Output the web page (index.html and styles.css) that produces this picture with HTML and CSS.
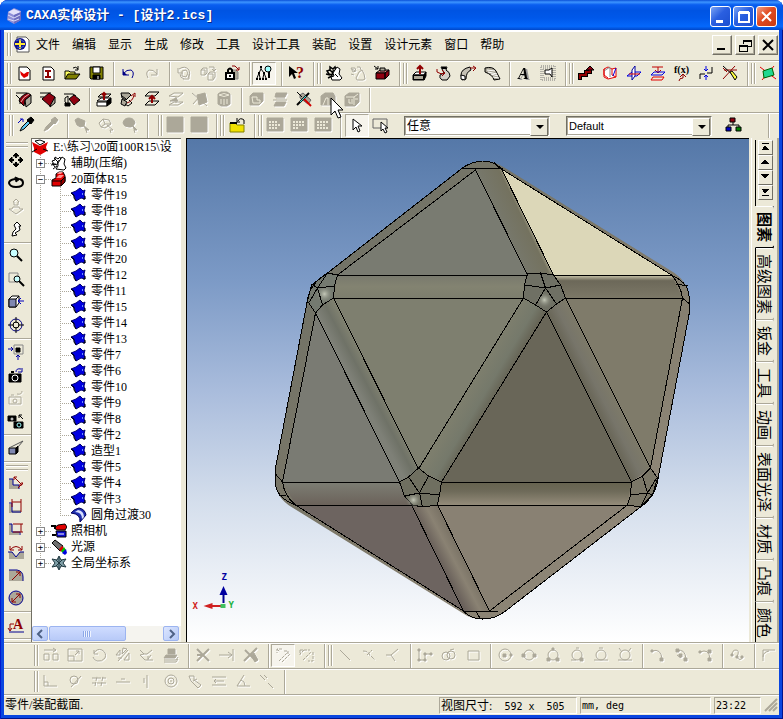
FILE: index.html
```html
<!DOCTYPE html>
<html lang="zh-CN">
<head>
    <meta charset="UTF-8">
    <meta name="viewport" content="width=device-width, initial-scale=1.0">
    <title>CAXA实体设计 - [设计2.ics]</title>
    <link rel="stylesheet" href="styles.css">
</head>
<body>

<!-- shared shapes -->
<svg class="defs" aria-hidden="true">
    <symbol id="part" viewBox="0 0 16 16">
        <path d="M0 6L5 4L9 1L12 4L14 3L13 7L14 12L10 11L5 14L4 11L3 9Z" fill="#0000e0" stroke="#000070"/>
        <path d="M0 6L3 8L3 11L5 14M14 9V12H12" stroke="#000" fill="none"/>
        <path d="M11 6h1v2h-1z" fill="#6a8cff"/>
    </symbol>
</svg>

<div class="window">
    <header class="titlebar">
        <svg class="app-icon" aria-hidden="true">
            <path d="M2 4l6-4 7 3v9l-7 4-7-4z" fill="#8f8fd8"/>
            <path d="M2 4l6-3 7 3-7 3z" fill="#e4e2fa"/>
            <path d="M8 7l7-3v8l-7 4z" fill="#6c6cc0"/>
            <path d="M2 7l6 3 6-3M2 11l6 2 5-2" stroke="#dcdcf8" fill="none"/>
        </svg>
        <h1>CAXA实体设计 - [设计2.ics]</h1>
        <div class="win-buttons">
            <button class="win-btn" aria-label="最小化"><svg><path d="M5 13h7v3h-7z" fill="#fff"/></svg></button>
            <button class="win-btn" aria-label="最大化"><svg><path d="M5 6h10v9h-10zM5 5h10" fill="none" stroke="#fff" stroke-width="2"/></svg></button>
            <button class="win-btn close" aria-label="关闭"><svg><path d="M5 5l9 9M14 5l-9 9" stroke="#fff" stroke-width="2"/></svg></button>
        </div>
    </header>

    <nav class="bar menu">
        <i class="grip"></i>
        <svg class="doc-icon" aria-hidden="true">
            <path d="M4 1h9l3 3v12h-12z" fill="#fff" stroke="#555"/>
            <circle cx="7" cy="8" r="6" fill="#10108c"/>
            <path d="M2 8h10M7 3v10" stroke="#ffe838" stroke-width="2" fill="none"/>
            <path d="M3 5q4-3 8 1M4 11q4 2 7-1" stroke="#4060d0" fill="none"/>
        </svg>
        <ul class="menu-list">
            <li><a href="#">文件</a></li>
            <li><a href="#">编辑</a></li>
            <li><a href="#">显示</a></li>
            <li><a href="#">生成</a></li>
            <li><a href="#">修改</a></li>
            <li><a href="#">工具</a></li>
            <li><a href="#">设计工具</a></li>
            <li><a href="#">装配</a></li>
            <li><a href="#">设置</a></li>
            <li><a href="#">设计元素</a></li>
            <li><a href="#">窗口</a></li>
            <li><a href="#">帮助</a></li>
        </ul>
        <div class="mdi-buttons">
            <button class="mdi-btn" aria-label="最小化文档"><svg><path d="M3 12h8" stroke="#000" stroke-width="2"/></svg></button>
            <button class="mdi-btn" aria-label="还原文档"><svg><path d="M6 7v-4h8v6h-3M6 4h8M2 8h8v6h-8zM2 9h8" fill="none" stroke="#000"/></svg></button>
            <button class="mdi-btn" aria-label="关闭文档"><svg><path d="M3 3l10 10M13 3l-10 10" stroke="#000" stroke-width="2"/></svg></button>
        </div>
    </nav>

    <!-- standard / assembly / feature / curve toolbars -->
    <div class="bar">
        <i class="grip"></i>
        <button class="tb" aria-label="新建设计"><svg><path class="w" d="M3 2h8l3 3v10h-11z"/><path d="M4 6l4 3 3-2 2 0-1 4-4 2-3-3z" fill="#e00000" stroke="none"/></svg></button>
        <button class="tb" aria-label="新建图纸"><svg><path class="w" d="M3 2h8l3 3v10h-11z"/><path class="ms" d="M5 6h6M8 6v6M5 12h6" stroke-width="2"/></svg></button>
        <button class="tb" aria-label="打开"><svg><path d="M1 14v-8h4l1 1h5v3" fill="#ffff60"/><path d="M1 14l3-5h12l-4 5z" fill="#808000"/><path d="M9 3q3-2 5 1M14 1v4h-3"/></svg></button>
        <button class="tb" aria-label="保存"><svg><path d="M2 2h13v12h-12l-1-1z" fill="#808000"/><path class="w" d="M5 2h7v6h-7z"/><path class="k" d="M5 10h7v4h-7z"/><path d="M10 11v3" stroke="#fff"/></svg></button>
        <i class="sep"></i>
        <button class="tb" aria-label="撤消"><svg><path class="bs" d="M3 4v6h6M3 9q4-5 8-4 4 2 1 8"/><path d="M3 6l4 4h-4z" fill="#000080" stroke="none"/></svg></button>
        <button class="tb" aria-label="重做" disabled><svg><path d="M13 4v6h-6M13 9q-4-5-8-4-4 2-1 8"/></svg></button>
        <i class="sep"></i>
        <button class="tb" aria-label="重新生成" disabled><svg><path d="M2 3v5h5M3 4q6-4 10 1 2 4-1 8M13 14h-6M4 9q0 4 4 5M13 9v5M6 6l4-1 2 3-2 4-4-1z"/></svg></button>
        <button class="tb" aria-label="复制零件" disabled><svg><path d="M1 5l2-2h4v5l-2 2h-4zM1 5h4v5M8 9l2-2h5v5l-2 3h-5zM8 9h5v5M9 2h5v4M12 4l2 2 2-2"/></svg></button>
        <button class="tb" aria-label="锁定"><svg><path class="s" d="M8 5h4l2 2v7h-4z" stroke="#888"/><path class="w" d="M2 8h8v6h-8z" stroke-width="2"/><path d="M4 7v-2q2-3 4 0v2M6 10v2" stroke-width="2"/><path class="ms" d="M8 1h3l4 4M15 2v3h-3"/></svg></button>
        <i class="sep"></i>
        <button class="tb pressed" aria-label="设计树"><svg><path d="M5 1v3l-2 4M5 4l3 4M3 8l-2 5M3 8l1 5M8 8l-1 5M8 8l2 5"/><path class="k" d="M4 1h2v2h-2zM2 7h2v2h-2zM7 7h2v2h-2zM0 13h2v2h-2zM3 13h2v2h-2zM6 13h2v2h-2zM9 13h2v2h-2z" stroke="none"/><circle cx="12" cy="4" r="3" fill="#a0ffff"/><path d="M13 7v6" stroke-width="2"/></svg></button>
        <i class="sep"></i>
        <button class="tb" aria-label="帮助"><svg><path class="k" d="M1 1v11l3-3 2 5 2-1-2-5h4z" stroke="none"/><text class="glyph" x="8" y="13" fill="#900000">?</text></svg></button>
        <i class="sep"></i>
        <i class="grip"></i>
        <button class="tb" aria-label="装配"><svg><path d="M1 6l3-1v-3l3 2 2-2 1 3-3 1-1 4-3-1zM0 9l4 1M2 13l4-2M4 5l3 3" stroke-width="1.5"/><path class="w" d="M7 8l4-6 3 2-1 5 3 4-2 2h-8l-1-3 3-1z"/><path d="M9 9l3 3"/></svg></button>
        <button class="tb" aria-label="解除装配" disabled><svg><path d="M1 3h4l1 3-3 1zM2 4l3 2M7 2h3l1 3M6 13l3-6 3-2 2 4 1 5-2 1h-6zM1 9l3 1"/></svg></button>
        <button class="tb" aria-label="插入零件"><svg><path d="M2 8h9l4-3h-9z" fill="#e08080"/><path class="m" d="M2 8h9v6h-9zM11 8l4-3v5l-4 4z"/><path class="s" d="M6 3h5v3h-5z"/><path d="M0 1l4 3M4 1v3h-3"/></svg></button>
        <i class="sep"></i>
        <i class="grip"></i>
        <button class="tb" aria-label="拉伸"><svg><path class="w" d="M1 10l3-3h10l-2 3z"/><path class="k" d="M1 10h11v5h-11zM12 10l2-3v4l-2 4z"/><path class="s" d="M2 11h9v3h-9z" stroke="none"/><path class="ms" d="M8 9v-8M5 4l3-3 3 3" stroke-width="2"/></svg></button>
        <button class="tb" aria-label="旋转"><svg><path d="M5 2h6l-1 3q4 2 4 6l-3 4h-5q-3-2-2-5l4-2z" fill="#d4d0c8"/><path d="M6 3h4" stroke-width="2"/><path class="ms" d="M1 4v3q4 3 8 1M6 5l3 3-3 3"/></svg></button>
        <button class="tb" aria-label="扫描"><svg><path d="M1 10q0-6 9-8l1 3q-5 2-5 9l-4 1z" fill="#c4c0b4"/><path class="w" d="M1 10l4 1v4l-4-1z"/><path class="ms" d="M10 3h5M13 1l3 2-3 3"/></svg></button>
        <button class="tb" aria-label="放样"><svg><path class="s" d="M1 3q8-2 11 3l4 8-6 1q-1-5-9-8z"/><path d="M3 5l8 1M4 7l9 2M7 9l7 2M9 12l6 1" stroke="#fff"/></svg></button>
        <i class="sep"></i>
        <button class="tb" aria-label="三维文字"><svg><text class="glyph slant" x="2" y="14">A</text></svg></button>
        <button class="tb" aria-label="拾取轮廓"><svg><path d="M1 1h14v14h-14zM3 3h10v10h-10z" stroke="#777" stroke-dasharray="1 1"/><path class="w" d="M5 5h4l3-2v9l-2-3h-5z"/></svg></button>
        <i class="sep"></i>
        <i class="grip"></i>
        <button class="tb" aria-label="三维曲线"><svg><path d="M2 15v-5h6v-3h4v-3" stroke-width="4"/><path class="ms" d="M2 14v-4h6v-3h4v-3" stroke-width="2"/><path class="m" d="M8 5l4-4 4 4z"/></svg></button>
        <button class="tb" aria-label="曲面曲线"><svg><path class="w" d="M2 4l4-2 4 2 4-1v9l-4 1-4 1-4-2z" stroke="#e00000"/><path d="M2 6l6-4M8 3v9" stroke="#888"/><path d="M2 4v6l4 3M10 4v6l4 2" stroke="#e00000"/><path d="M14 3l-3 8" stroke="#0000e0"/></svg></button>
        <button class="tb" aria-label="交线"><svg><path d="M1 11l5-4h9l-4 4z" stroke="#0000e0"/><path class="w" d="M6 5l3-4v10l-3 4z" stroke="#0000a0"/><path d="M3 9h11" stroke="#e00000"/></svg></button>
        <button class="tb" aria-label="投影曲线"><svg><path d="M2 2h11M8 2v5M5 5l3 3 3-3" stroke="#c00000"/><path d="M4 7h11l-3 3h-11z" stroke="#0000e0"/><path d="M3 12h11l-2 3h-11z" stroke="#e00000"/></svg></button>
        <button class="tb" aria-label="公式曲线"><svg><text class="glyph fx" x="0" y="8">f(x)</text><path class="ms" d="M5 16q0-3 4-3v-3M6 12l3-3 3 3"/></svg></button>
        <button class="tb" aria-label="拟合曲线"><svg><path d="M2 14v-5h5M9 8h5v-6"/><path d="M8 1v5M6 4l2 2 2-2M8 15v-5M6 12l2-2 2 2" stroke="#0000e0"/></svg></button>
        <button class="tb" aria-label="编辑曲线"><svg><path class="ms" d="M1 14l12-13M1 3l4 4M2 5h13"/><path d="M1 1l13 12"/><path d="M8 7l2-1 5 6-2 3z" fill="#ffff40"/></svg></button>
        <i class="sep"></i>
        <i class="grip"></i>
        <button class="tb" aria-label="二维草图"><svg><path d="M0 2l16 12M14 1l-12 14" stroke="#e00000"/><path d="M3 6l9-3 2 7-10 3z" fill="#20d890" stroke="#006000"/></svg></button>
    </div>

    <!-- edit toolbars -->
    <div class="bar">
        <i class="grip"></i>
        <button class="tb" aria-label="圆角过渡"><svg><path d="M0 2h11M0 4l4 4v5"/><path class="s" d="M9 9l6-5v8l-5 4z"/><path class="m" d="M3 10q2-6 9-8l3 2-6 5-1 6z"/><path d="M5 11q2-5 8-8" stroke="#e8b0b0"/></svg></button>
        <button class="tb" aria-label="边倒角"><svg><path d="M0 2h11M0 6h4"/><path class="s" d="M10 10l5-4v6l-5 4z"/><path class="m" d="M2 8l7-6 6 4-5 9z"/></svg></button>
        <button class="tb" aria-label="面拔模"><svg><path d="M0 3h9l3 2M1 7l3-2v9l-3-3z"/><path class="k" d="M1 12h5v3h-5z"/><path class="m" d="M5 8l5-4 6 5-6 5z"/></svg></button>
        <i class="sep"></i>
        <button class="tb" aria-label="表面移动"><svg><path class="w" d="M1 10l4-3h10l-4 3zM1 11h10v4h-10z"/><path class="k" d="M11 10l4-3v5l-4 3z"/><path d="M2 6l3-3h10l-3 3z"/><path class="ms" d="M8 9v-7M6 4l2-2 2 2" stroke-width="2"/></svg></button>
        <button class="tb" aria-label="表面匹配"><svg><path class="s" d="M1 2h8l2 2-5 5-4-2zM2 8l5 3-2 4-4-2z"/><path d="M2 5l4 3M9 9l3 3-4 3-3-2"/><path class="ms" d="M7 12q6-2 7-8M11 5l4-3v4"/></svg></button>
        <button class="tb" aria-label="表面等距"><svg><path d="M1 5l4-4h10l-4 4zM1 14l4-4h10l-4 4z"/><path class="ms" d="M8 12v-7M5 8l3-3 3 3" stroke-width="2"/></svg></button>
        <button class="tb" aria-label="删除表面" disabled><svg><path d="M1 5l5-3h9l-5 4zM1 14l5-3h9l-5 3zM8 12v-6"/><path class="s" d="M2 10l6-3 2 3z"/></svg></button>
        <button class="tb" aria-label="编辑半径" disabled><svg><path class="s" d="M5 4l8-2 2 9-8 3z"/><path d="M0 2l15 13M1 13l7-8"/></svg></button>
        <button class="tb" aria-label="抽壳" disabled><svg><path class="s" d="M2 3l3-2h6l3 2v10l-3 2h-6l-3-2z"/><path d="M3 4q5-3 10 0-5 3-10 0M5 8v5M8 8v6M11 8v5" stroke="#ece9d8"/></svg></button>
        <i class="sep"></i>
        <button class="tb" aria-label="布尔运算" disabled><svg><path class="s" d="M2 5l3-3h10v8l-4 4h-9z"/><path d="M4 6h5v3h3v3h-7z" stroke="#ece9d8"/></svg></button>
        <button class="tb" aria-label="分割零件" disabled><svg><path class="s" d="M4 2h11l-2 4h-10zM4 11h10l-2 4h-10z"/><path d="M1 9h14M4 7h9"/></svg></button>
        <button class="tb" aria-label="截面"><svg><path class="s" d="M4 4l3-2 8 7-3 4-8-6z" stroke="#666"/><path d="M1 14l12-12" stroke-width="2"/><path d="M4 11l6-6" stroke="#40e0e0"/><path d="M1 1l5 5"/><path d="M8 8l7 7" stroke="#d00000" stroke-width="2"/></svg></button>
        <button class="tb" aria-label="零件/装配截面" disabled><svg><path class="s" d="M1 5l4-3h8l2 3v9h-14z"/><path d="M3 14l3-7h2M8 7v7" stroke="#ece9d8"/></svg></button>
        <button class="tb" aria-label="加厚" disabled><svg><path class="s" d="M1 5l4-3h10v9l-4 4h-10z"/><path d="M2 6h8v8M10 6l4-3M5 8v4h2M8 8v5M11 8h3" stroke="#ece9d8"/></svg></button>
        <i class="sep"></i>
    </div>

    <!-- select toolbars -->
    <div class="bar select-bar">
        <i class="grip"></i>
        <button class="tb" aria-label="提取效果"><svg><path d="M2 14l2-4 6-6 2 2-6 6z" fill="#60c8f0"/><path class="k" d="M9 3l4-3 3 3-3 4z"/><path d="M0 6l4-4M2 2h3v3" stroke="#0000c0"/></svg></button>
        <button class="tb" aria-label="应用效果" disabled><svg><path class="s" d="M2 14l2-4 6-6 2 2-6 6zM9 3l4-3 3 3-3 4z"/></svg></button>
        <i class="sep"></i>
        <button class="tb" aria-label="选择面" disabled><svg><path class="s" d="M1 3l3-2 2 1 5 2-1 5-4 1-3-2zM9 8l6 5-3 0 1 3"/></svg></button>
        <button class="tb" aria-label="选择边" disabled><svg><path d="M1 6l4-4 6 1 2 4-6 4-4-1zM5 2l2 5-4 3M7 7l6 0M9 8l6 5-3 0 1 3"/></svg></button>
        <button class="tb" aria-label="选择点" disabled><svg><path class="s" d="M1 6q1-5 6-5t6 5q-2 5-6 4-5 0-6-4zM10 8l5 5-3 0 1 3"/></svg></button>
        <i class="sep"></i>
        <i class="grip spaced"></i>
        <button class="tb" aria-label="色样一" disabled><svg><path class="s" d="M0 0h16v15h-16z"/></svg></button>
        <button class="tb" aria-label="色样二" disabled><svg><path class="s" d="M0 0h16v15h-16z"/></svg></button>
        <i class="sep"></i>
        <i class="grip"></i>
        <button class="tb" aria-label="图素库"><svg><path d="M1 15v-9h5l2 2h7v7z" fill="#f0e000" stroke="#808000"/><path class="k" d="M1 5h7v2h-7z" stroke="none"/><path d="M15 7v-4q-4-3-6 1M8 1v4h3"/></svg></button>
        <i class="sep"></i>
        <i class="grip"></i>
        <button class="tb" aria-label="平铺一" disabled><svg><path class="s" d="M0 1h16v13h-16z"/><path d="M2 5h9M2 8h12M2 11h9" stroke="#ece9d8" stroke-width="2" stroke-dasharray="2 1"/></svg></button>
        <button class="tb" aria-label="平铺二" disabled><svg><path class="s" d="M0 1h16v13h-16z"/><path d="M2 5h12M2 8h12M2 11h6" stroke="#ece9d8" stroke-width="2" stroke-dasharray="2 1"/></svg></button>
        <button class="tb" aria-label="平铺三" disabled><svg><path class="s" d="M0 1h16v13h-16z"/><path d="M2 5h12M2 8h9M2 11h12" stroke="#ece9d8" stroke-width="2" stroke-dasharray="2 1"/></svg></button>
        <i class="sep"></i>
        <button class="tb pressed" aria-label="选择"><svg><path class="w" d="M4 2v11l3-3 2 5 2-1-2-5h4z"/></svg></button>
        <button class="tb" aria-label="框选"><svg><path d="M0 2h14v9h-14z" stroke="#666"/><path class="w" d="M8 5v9l2-2 2 4 2-1-2-4h3z"/></svg></button>
        <span class="combo">
            <select class="cjk" aria-label="选择过滤"><option>任意</option></select>
        </span>
        <span class="combo">
            <select aria-label="配置"><option>Default</option></select>
        </span>
        <button class="tb" aria-label="结构"><svg><path d="M8 5v3M3 11v-3h11v3"/><path class="m" d="M5 1h5v4h-5z"/><path d="M1 10h5v4h-5z" fill="#0000c0"/><path d="M11 10h5v4h-5z" fill="#008000"/></svg></button>
        <i class="sep last"></i>
    </div>

    <main class="workspace">
        <div class="side-tools">
            <i class="grip-h"></i>
            <button class="tb" aria-label="平移"><svg><path d="M8 2v4M8 10v4M2 8h4M10 8h4" stroke-width="2"/><path class="k" d="M5 4l3-3 3 3zM5 12l3 3 3-3zM4 5l-3 3 3 3zM12 5l3 3-3 3z"/></svg></button>
            <button class="tb" aria-label="旋转视图"><svg><path d="M7 4q-6 1-6 4 1 4 7 4 7 0 7-4 0-3-3-4" stroke-width="2"/><path class="k" d="M7 2l5 2-4 3z"/></svg></button>
            <button class="tb" aria-label="前后移动" disabled><svg><path d="M8 1l3 3h-1v3h-4v-3h-1zM5 9h6l1 2h3l-7 5-7-5h3z"/></svg></button>
            <button class="tb" aria-label="任意视向"><svg><path class="w" d="M6 4l3-3 4 4h-2l1 4-5 3 2 2-5 1 1-4 3-3-2-4z"/></svg></button>
            <i class="sep-h"></i>
            <button class="tb" aria-label="动态缩放"><svg><circle cx="6" cy="5" r="4" fill="#c8ffff"/><path d="M9 8l5 5" stroke-width="2"/></svg></button>
            <button class="tb" aria-label="局部放大"><svg><path d="M1 2h9v9h-9z" stroke="#888"/><circle cx="9" cy="8" r="3" fill="#c8ffff"/><path d="M11 10l5 5" stroke-width="2"/></svg></button>
            <button class="tb" aria-label="指定面"><svg><path class="w" d="M1 5l3-3h7v7l-3 4h-7z"/><path d="M1 5h7v8h-7z" fill="#8088b0"/><path d="M8 5l3-3"/><path d="M16 7h-5M13 4l-3 3 3 3" stroke="#0000c0"/></svg></button>
            <button class="tb" aria-label="指定视点"><svg><circle cx="8" cy="8" r="6" stroke="#000080"/><path d="M8 0v6M8 10v6M0 8h6M10 8h6"/><circle cx="8" cy="8" r="3"/></svg></button>
            <i class="sep-h"></i>
            <button class="tb" aria-label="显示全部"><svg><path d="M6 1h9v9h-9z" stroke="#888"/><path class="k" d="M8 4h4v4h-4z"/><path d="M0 5h5M3 3l2 2-2 2M10 16v-5M8 13l2-2 2 2" stroke="#0000a0"/></svg></button>
            <button class="tb" aria-label="存储视向"><svg><path class="k" d="M1 7h12v8h-12z"/><path d="M3 5h3" stroke-width="2"/><circle cx="7" cy="11" r="3" stroke="#fff"/><path d="M8 5q0-4 5-3M14 1v4h-4" stroke="#0000a0"/></svg></button>
            <button class="tb" aria-label="恢复视向" disabled><svg><path d="M1 7h12v7h-12zM3 5h3M9 4q5 1 5-3"/><circle cx="7" cy="11" r="2"/></svg></button>
            <button class="tb" aria-label="上一视向"><svg><path class="k" d="M0 3h8v5h-8zM6 9h9v6h-9z"/><circle cx="4" cy="6" r="1" stroke="#fff"/><circle cx="11" cy="12" r="2" stroke="#a0ffff"/><path d="M15 6l-4-4M11 5v-3h3"/></svg></button>
            <i class="sep-h"></i>
            <button class="tb" aria-label="透视"><svg><path d="M1 8h7v6h-7z" fill="#8088b0"/><path class="k" d="M8 8l2-2v6l-2 2z"/><path d="M1 8l14-7-5 6" stroke="#555"/></svg></button>
            <i class="sep-h"></i>
            <i class="grip-h"></i>
            <button class="tb" aria-label="智能标注"><svg><path class="s" d="M1 4h4v6h6v4h-10z" stroke="none"/><path class="bs" d="M1 4h4v6h6v4"/><path class="ms" d="M6 2l8 8M6 5v-3h3M14 7v3h-3M10 13l5-5"/></svg></button>
            <button class="tb" aria-label="水平标注"><svg><path class="s" d="M1 6h3v6h9v3h-12z" stroke="none"/><path class="bs" d="M1 5h3v9h9"/><path class="ms" d="M4 1v8M13 1v13M4 4h9"/></svg></button>
            <button class="tb" aria-label="垂直标注"><svg><path class="s" d="M1 3h3v8h7v3h-10z" stroke="none"/><path class="bs" d="M1 3h3v8h8v3"/><path class="ms" d="M5 3h10M5 11h10M13 3v8"/></svg></button>
            <button class="tb" aria-label="角度标注"><svg><path class="s" d="M1 8h3l4 5 4-5h4v7h-15z" stroke="none"/><path class="bs" d="M0 8h4l4 5 4-5h4"/><path class="ms" d="M2 6q6-7 12 0M2 2v4h4M14 2v4h-4"/></svg></button>
            <button class="tb" aria-label="半径标注"><svg><path class="s" d="M1 3h8q6 1 6 7v4h-14z" stroke="none"/><path class="bs" d="M1 3h8q6 1 6 7v4"/><path class="ms" d="M4 13l8-8M8 5h4v4"/></svg></button>
            <button class="tb" aria-label="直径标注"><svg><circle class="s bs" cx="8" cy="8" r="7"/><path class="ms" d="M4 12l8-8M8 4h4v4M4 8v4h4"/></svg></button>
            <i class="sep-h"></i>
            <button class="tb" aria-label="文字标注"><svg><text class="glyph small" x="5" y="12" fill="#900000">A</text><path class="ms" d="M2 13v-6h4M0 11l2 3 2-3"/><path class="bs" d="M1 15h15"/></svg></button>
            <i class="sep-h"></i>
        </div>

        <aside class="tree-pane">
            <div class="tree">
                <div class="row">
                    <svg><path d="M0 3l8 4 8-4-2 5 1 4-7 4-6-3v-4z" fill="#e00000"/><path d="M3 2l5 4 5-3-5-2z" fill="#fff" stroke="#000"/><path d="M0 13l5-3M16 12l-5-2" stroke="#000"/></svg>
                    <span class="root-name">E:\练习\20面100R15\设</span>
                </div>
                <ul class="branches">
                    <li>
                        <div class="row"><button class="toggle" aria-label="展开 辅助">+</button><i class="stub"></i>
                            <svg><path d="M1 6l3-1v-3l3 2 2-2 1 3-3 1-1 4-3-1zM0 10l5-1M2 14l4-3M3 3l4 4M1 8l3 4" stroke="#000"/><path d="M7 8l4-6 3 2-1 5 2 4-2 2-8-1 2-3z" fill="#fff" stroke="#000"/></svg>
                            <span>辅助(压缩)</span></div>
                    </li>
                    <li>
                        <div class="row"><button class="toggle" aria-label="折叠 20面体R15">−</button><i class="stub"></i>
                            <svg><path d="M1 9l4-2v-4l3-2h4l2 4v5l-4 5h-9z" fill="#e00000" stroke="#000"/><path d="M5 7l3-3h5l-3 3zM6 3l2-2h4l-2 2z" fill="#ff9090"/><path d="M10 10l4-4v5l-4 4z" fill="#900000" stroke="#000"/><path d="M1 10h9" stroke="#000"/></svg>
                            <span>20面体R15</span></div>
                        <ul class="parts">
                            <li class="row"><i class="stub"></i><svg><use href="#part"/></svg><span>零件19</span></li>
                            <li class="row"><i class="stub"></i><svg><use href="#part"/></svg><span>零件18</span></li>
                            <li class="row"><i class="stub"></i><svg><use href="#part"/></svg><span>零件17</span></li>
                            <li class="row"><i class="stub"></i><svg><use href="#part"/></svg><span>零件16</span></li>
                            <li class="row"><i class="stub"></i><svg><use href="#part"/></svg><span>零件20</span></li>
                            <li class="row"><i class="stub"></i><svg><use href="#part"/></svg><span>零件12</span></li>
                            <li class="row"><i class="stub"></i><svg><use href="#part"/></svg><span>零件11</span></li>
                            <li class="row"><i class="stub"></i><svg><use href="#part"/></svg><span>零件15</span></li>
                            <li class="row"><i class="stub"></i><svg><use href="#part"/></svg><span>零件14</span></li>
                            <li class="row"><i class="stub"></i><svg><use href="#part"/></svg><span>零件13</span></li>
                            <li class="row"><i class="stub"></i><svg><use href="#part"/></svg><span>零件7</span></li>
                            <li class="row"><i class="stub"></i><svg><use href="#part"/></svg><span>零件6</span></li>
                            <li class="row"><i class="stub"></i><svg><use href="#part"/></svg><span>零件10</span></li>
                            <li class="row"><i class="stub"></i><svg><use href="#part"/></svg><span>零件9</span></li>
                            <li class="row"><i class="stub"></i><svg><use href="#part"/></svg><span>零件8</span></li>
                            <li class="row"><i class="stub"></i><svg><use href="#part"/></svg><span>零件2</span></li>
                            <li class="row"><i class="stub"></i><svg><use href="#part"/></svg><span>造型1</span></li>
                            <li class="row"><i class="stub"></i><svg><use href="#part"/></svg><span>零件5</span></li>
                            <li class="row"><i class="stub"></i><svg><use href="#part"/></svg><span>零件4</span></li>
                            <li class="row"><i class="stub"></i><svg><use href="#part"/></svg><span>零件3</span></li>
                            <li class="row"><i class="stub"></i>
                                <svg><path d="M0 6q3-4 8-5 6 1 7 7l-6 7q1-8-9-9z" fill="#2030b0" stroke="#000060"/><path d="M4 5q7 0 7 7l2-2q0-6-6-7z" fill="#d8e0ff"/></svg>
                                <span>圆角过渡30</span></li>
                        </ul>
                    </li>
                    <li class="row"><button class="toggle" aria-label="展开 照相机">+</button><i class="stub"></i>
                        <svg><path d="M3 5l4-3 7-1 2 3-2 3h-8z" fill="#e00000" stroke="#000"/><path d="M5 8h10v6h-9z" fill="#1010d0" stroke="#000"/><path d="M7 11h6" stroke="#fff"/><path d="M0 3h4v3M1 12h4" stroke="#000" stroke-width="2"/></svg>
                        <span>照相机</span></li>
                    <li class="row"><button class="toggle" aria-label="展开 光源">+</button><i class="stub"></i>
                        <svg><path d="M1 4l3-3 8 6-3 5z" fill="#707070" stroke="#000"/><path d="M8 10l3-3 2 2-3 4z" fill="#e00000"/><path d="M10 12l3-4 2 3-3 3z" fill="#00c000"/><path d="M11 14l4-4 1 4-2 2z" fill="#0000e0"/></svg>
                        <span>光源</span></li>
                    <li class="row"><button class="toggle" aria-label="展开 全局坐标系">+</button><i class="stub"></i>
                        <svg><path d="M8 1l2 4 5-1-3 4 3 4-5-1-2 4-2-4-5 1 3-4-3-4 5 1z" fill="#80a0a8" stroke="#203840"/><path d="M8 2v12M5 5l6 6M11 5l-6 6" stroke="#203840"/></svg>
                        <span>全局坐标系</span></li>
                </ul>
            </div>
            <div class="scroll">
                <button class="scroll-btn" aria-label="向左滚动"><svg><path d="M9 4l-4 4 4 4" stroke="#4d6185" stroke-width="2" fill="none"/></svg></button>
                <div class="track"><div class="thumb"></div></div>
                <button class="scroll-btn" aria-label="向右滚动"><svg><path d="M6 4l4 4-4 4" stroke="#4d6185" stroke-width="2" fill="none"/></svg></button>
            </div>
        </aside>

        <section class="view" aria-label="三维设计环境">
            <svg viewBox="187 139 561 503" role="img" aria-label="20面体">
                <defs>
                    <linearGradient id="bandMid" x1="0" y1="0" x2="0" y2="1"><stop offset="0" stop-color="#78796d"/><stop offset=".5" stop-color="#838371"/><stop offset="1" stop-color="#7d7e6e"/></linearGradient>
                    <linearGradient id="bandRight" x1="0" y1="0" x2="0" y2="1"><stop offset="0" stop-color="#d0cbb0"/><stop offset=".25" stop-color="#6c6859"/><stop offset="1" stop-color="#7c7867"/></linearGradient>
                    <linearGradient id="bandLow" x1="0" y1="0" x2="0" y2="1"><stop offset="0" stop-color="#7d7e74"/><stop offset="1" stop-color="#6b625a"/></linearGradient>
                    <linearGradient id="bandLowR" x1="0" y1="0" x2="0" y2="1"><stop offset="0" stop-color="#66634f"/><stop offset=".4" stop-color="#6e6a59"/><stop offset="1" stop-color="#948c7a"/></linearGradient>
                    <linearGradient id="bandCF" gradientUnits="userSpaceOnUse" x1="334" y1="300" x2="315" y2="310"><stop offset="0" stop-color="#828371"/><stop offset=".5" stop-color="#6f7267"/><stop offset="1" stop-color="#7e8077"/></linearGradient>
                    <linearGradient id="bandCD" gradientUnits="userSpaceOnUse" x1="523" y1="298" x2="545" y2="311"><stop offset="0" stop-color="#7d7e6d"/><stop offset=".6" stop-color="#75796b"/><stop offset="1" stop-color="#676556"/></linearGradient>
                    <linearGradient id="bandDE" gradientUnits="userSpaceOnUse" x1="546" y1="312" x2="566" y2="302"><stop offset="0" stop-color="#686556"/><stop offset=".5" stop-color="#77756a"/><stop offset="1" stop-color="#7d7a69"/></linearGradient>
                    <linearGradient id="bandAB" gradientUnits="userSpaceOnUse" x1="475" y1="172" x2="500" y2="160"><stop offset="0" stop-color="#77786c"/><stop offset=".8" stop-color="#74725f"/><stop offset="1" stop-color="#b8b397"/></linearGradient>
                    <linearGradient id="bandGH" gradientUnits="userSpaceOnUse" x1="411" y1="507" x2="434" y2="495"><stop offset="0" stop-color="#6a615b"/><stop offset=".5" stop-color="#8a8273"/><stop offset="1" stop-color="#766f62"/></linearGradient>
                    <radialGradient id="shine"><stop offset="0" stop-color="#c4c8b8"/><stop offset="1" stop-color="#7b7d70" stop-opacity="0"/></radialGradient>
                    <linearGradient id="shell" x1="0" y1="0" x2="1" y2="1"><stop offset="0" stop-color="#6c7066"/><stop offset=".5" stop-color="#7d7868"/><stop offset="1" stop-color="#998f80"/></linearGradient>
                </defs>

                <path fill="url(#shell)" d="M482 161Q494 161 503 167L674 273Q686 282 688 292Q690 303 689 312L658 476Q656 496 640 507L505 611Q495 619 482 619Q470 619 462 613L291 507Q276 498 275 483L275 468L307 300Q309 284 327 273L462 168Q470 162 482 161Z"/>
                <!-- rounded edges -->
                <path fill="url(#bandMid)" d="M337 275H527L523 298H333Z"/>
                <path fill="url(#bandRight)" d="M553 275H671L682 298H565Z"/>
                <path fill="url(#bandLow)" d="M282 482H399L411 505H295Z"/>
                <path fill="url(#bandLowR)" d="M441 482H631L627 505H437Z"/>
                <path fill="url(#bandCF)" d="M333 298L418 469L399 482L315 313Z"/>
                <path fill="url(#bandCD)" d="M523 298L418 469L441 482L546 312Z"/>
                <path fill="url(#bandDE)" d="M546 312L565 298L650 468L631 482Z"/>
                <path fill="url(#bandAB)" d="M475 170L501 169L553 275L527 275Z"/>
                <path fill="url(#bandGH)" d="M411 505H437L489 611H463Z"/>
                <!-- faces -->
                <g class="face">
                    <path fill="#797b71" d="M475 170L337 275H527Z"/>
                    <path fill="#dcd7b8" d="M501 169L553 275H671Z"/>
                    <path fill="#7e7f6f" d="M333 298H523L418 469Z"/>
                    <path fill="#696658" d="M546 312L441 482H631Z"/>
                    <path fill="#7f7b6a" d="M565 298H682L650 468Z"/>
                    <path fill="#7a7b73" d="M315 313L282 482H399Z"/>
                    <path fill="#6d6460" d="M295 505H411L463 611Z"/>
                    <path fill="#898173" d="M437 505H627L489 611Z"/>
                </g>

                <!-- corners -->
                <g class="face">
                    <path fill="#6f7064" d="M527 274L540 273L553 275L560 285L565 298L556 304L546 312L535 305L523 298L524 285Z"/>
                    <path fill="#6f6f60" d="M418 468L428 476L441 482L439 495L437 505L422 507L412 505L404 496L399 482L408 477Z"/>
                    <path fill="#747a70" d="M327 273L337 275L334 286L333 298L322 305L315 313L307 301L311 285Z"/>
                    <path fill="#7b7767" d="M650 468L642 476L631 482L630 495L627 505L640 507L652 495L657 478Z"/>
                </g>
                <circle cx="324" cy="294" r="9" fill="url(#shine)"/>
                <circle cx="544" cy="300" r="8" fill="url(#shine)"/>
                <circle cx="413" cy="500" r="8" fill="url(#shine)"/>
                <g class="wire">
                    <path d="M671 275Q686 282 688 292Q690 303 689 312L658 476Q656 496 640 507L505 611Q495 619 482 619Q470 619 463 611"/>
                    <path d="M295 505Q276 498 275 483L275 468L307 300Q309 284 327 273L462 168Q470 162 482 161Q494 161 501 169"/>
                    <path d="M337 275H527M553 275H671M333 298H523M565 298H682M282 482H399M441 482H631M295 505H411M437 505H627"/>
                    <path d="M545 288L540 273M545 288L560 285M545 288L556 304M545 288L535 305M545 288L524 285"/>
                    <path d="M419 493L428 476M419 493L439 495M419 493L422 507M419 493L404 496M419 493L408 477"/>
                    <path d="M317 288L327 273M317 288L334 286M317 288L322 305M317 288L309 302M317 288L311 284"/>
                    <path d="M647 493L642 476M647 493L630 495M647 493L640 507M647 493L652 495M647 493L656 478"/>
                    <path d="M671 275Q680 285 682 298L689 304M676 284L687 286"/>
                    <path d="M282 482Q284 496 295 505M275 474L282 482M278 495L285 496"/>
                    <path d="M462 168H502M494 162L498 168M463 611H497M476 612L480 619"/>
                </g>

                <!-- axis triad -->
                <g class="axes">
                    <path d="M223 603V592" stroke="#000090" stroke-width="2"/><path d="M219 595L223 586L227 595Z" fill="#0000a0"/>
                    <path d="M222 606H208" stroke="#d02020" stroke-width="2"/><path d="M212 603L203 606L212 609Z" fill="#d02020"/>
                    <path d="M220 604H225V608H220Z" fill="#40c060"/>
                    <text x="221" y="580" fill="#0000a0">Z</text>
                    <text x="192" y="609" fill="#d02020">X</text>
                    <text x="228" y="608" fill="#20b040">Y</text>
                </g>
            </svg>
        </section>

        <aside class="catalog">
            <div class="pager">
                <button aria-label="首页"><svg><path d="M3 2h7v1h-7zM6 4l4 5h-7z"/></svg></button>
                <button aria-label="上一页"><svg><path d="M6 3l4 5h-8z"/></svg></button>
                <button aria-label="下一页"><svg><path d="M2 3h8l-4 5z"/></svg></button>
                <button aria-label="末页"><svg><path d="M3 3h7l-4 5zM3 9h7v1h-7z"/></svg></button>
            </div>
            <div class="tabs" role="tablist">
                <button class="tab active" role="tab" aria-selected="true">图素</button>
                <button class="tab" role="tab">高级图素</button>
                <button class="tab" role="tab">钣金</button>
                <button class="tab" role="tab">工具</button>
                <button class="tab" role="tab">动画</button>
                <button class="tab" role="tab">表面光泽</button>
                <button class="tab" role="tab">材质</button>
                <button class="tab" role="tab">凸痕</button>
                <button class="tab" role="tab">颜色</button>
            </div>
        </aside>
    </main>

    <!-- sketch toolbars -->
    <div class="bar sketch-bar">
        <i class="grip"></i>
        <button class="tb" aria-label="平移曲线" disabled><svg><path d="M1 7h5v6h-5zM10 7h5v6h-5zM1 3h12M10 1l3 2-3 2"/></svg></button>
        <button class="tb" aria-label="缩放曲线" disabled><svg><path d="M1 2h14v12h-14zM1 9h6v5M8 8l4-4M9 4h3v3"/></svg></button>
        <button class="tb" aria-label="旋转曲线" disabled><svg><path d="M3 3v4h4M3 6q3-5 8-3 5 3 3 8-3 4-8 3-3-1-4-4"/></svg></button>
        <button class="tb" aria-label="镜像曲线" disabled><svg><path d="M1 8l4-5v5zM8 1l-1 6 5-5zM3 14l10-11M9 13l5-7v7zM3 11h4"/></svg></button>
        <button class="tb" aria-label="等距曲线" disabled><svg><path d="M1 3l4 4h3l5-4M5 7l-4 1 5 5h8M9 9v4M12 8l-3 4"/></svg></button>
        <button class="tb" aria-label="投影约束" disabled><svg><path class="s" d="M5 2h7v5h-7zM3 8h11l-2 3h-11z"/><path d="M1 13h12l2-3M1 15h12l2-3"/></svg></button>
        <i class="sep"></i>
        <button class="tb" aria-label="裁剪曲线" disabled><svg><path d="M2 2l12 12M14 2l-12 12M2 8h7" stroke-width="2"/></svg></button>
        <button class="tb" aria-label="延伸曲线" disabled><svg><path d="M0 8h13M9 5l4 3-4 3M14 2v12"/></svg></button>
        <button class="tb" aria-label="打断曲线" disabled><svg><path d="M1 14l13-13M2 3l11 11" stroke-width="2"/><path class="s" d="M8 8l3-2 4 7-3 2z"/></svg></button>
        <i class="sep"></i>
        <button class="tb pressed" aria-label="显示曲线尺寸" disabled><svg><path d="M2 2l3 3M7 2h-5v4M4 14l9-9M7 15l8-8M9 4h4v4" stroke-dasharray="3 1"/></svg></button>
        <button class="tb" aria-label="显示端点尺寸" disabled><svg><path d="M1 3h10M1 3v5M5 3l-4 4M4 13l8-8M14 5v9h-5" stroke-dasharray="3 1"/></svg></button>
        <i class="sep"></i>
        <i class="grip"></i>
        <button class="tb" aria-label="两点线" disabled><svg><path d="M3 3l10 10"/></svg></button>
        <button class="tb" aria-label="切线" disabled><svg><path d="M2 4q6 0 7 5M6 8l5-5M10 9l4 4" stroke-dasharray="4 1"/></svg></button>
        <button class="tb" aria-label="法线" disabled><svg><path d="M1 8h5l7-6M6 8l4 6"/></svg></button>
        <i class="sep"></i>
        <button class="tb" aria-label="连续直线" disabled><svg><path d="M2 3v10h6v-6h6"/><path class="s" d="M1 2h2v2h-2zM1 12h2v2h-2zM7 12h2v2h-2zM7 6h2v2h-2zM13 6h2v2h-2z"/></svg></button>
        <button class="tb" aria-label="多边形" disabled><svg><circle cx="5" cy="9" r="4"/><circle cx="10" cy="8" r="4"/><path d="M9 3l4-1"/></svg></button>
        <button class="tb" aria-label="矩形" disabled><svg><path d="M3 4h11v9h-11z"/></svg></button>
        <i class="sep"></i>
        <button class="tb" aria-label="圆心半径圆" disabled><svg><circle cx="8" cy="8" r="6"/><path class="s" d="M6 7h3v3h-3zM13 7h2v2h-2z"/></svg></button>
        <button class="tb" aria-label="两点圆" disabled><svg><circle cx="8" cy="8" r="5"/><path class="s" d="M1 7h3v3h-3zM12 7h3v3h-3z"/></svg></button>
        <button class="tb" aria-label="三点圆" disabled><svg><circle cx="8" cy="8" r="5"/><path class="s" d="M7 1h2v2h-2zM2 11h3v3h-3zM11 11h3v3h-3z"/></svg></button>
        <button class="tb" aria-label="一切两点圆" disabled><svg><circle cx="8" cy="8" r="5"/><path d="M2 13h5M7 1h3"/><path class="s" d="M11 11h3v3h-3z"/></svg></button>
        <button class="tb" aria-label="两切一点圆" disabled><svg><circle cx="8" cy="8" r="5"/><path d="M1 13h14M6 1h4"/></svg></button>
        <button class="tb" aria-label="三切圆" disabled><svg><circle cx="8" cy="8" r="5"/><path d="M1 13h14M2 1l3 4M14 1l-3 4"/></svg></button>
        <i class="sep"></i>
        <button class="tb" aria-label="两端点弧" disabled><svg><path d="M3 4q9-3 10 8"/><path class="s" d="M2 3h2v2h-2zM11 11h3v3h-3z"/></svg></button>
        <button class="tb" aria-label="圆心端点弧" disabled><svg><path d="M4 4q8-3 9 8M4 8l4 3"/><path class="s" d="M3 2h3v3h-3zM6 7h3v3h-3zM11 11h3v3h-3z"/></svg></button>
        <button class="tb" aria-label="三点弧" disabled><svg><path d="M3 5q9-4 10 7"/><path class="s" d="M2 4h2v2h-2zM11 3h3v3h-3zM11 11h3v3h-3z"/></svg></button>
        <i class="sep"></i>
        <button class="tb" aria-label="样条" disabled><svg><path d="M3 8q0-5 4-5t1 7q3 5 6 0"/><path class="s" d="M2 7h2v2h-2zM7 9h2v2h-2zM12 9h2v2h-2z"/></svg></button>
        <i class="sep"></i>
        <button class="tb" aria-label="圆角" disabled><svg><path d="M2 14v-11h12M2 10q0-5 6-6"/></svg></button>
    </div>

    <div class="bar sketch-bar">
        <i class="grip"></i>
        <button class="tb" aria-label="垂直约束" disabled><svg><path d="M1 2v11h13M1 9h4v4"/></svg></button>
        <button class="tb" aria-label="相切约束" disabled><svg><circle cx="7" cy="7" r="4"/><path d="M4 14l10-11"/></svg></button>
        <button class="tb" aria-label="平行约束" disabled><svg><path d="M1 5h14M1 10h14M4 13l2-10M10 13l2-10" stroke-dasharray="4 1"/></svg></button>
        <button class="tb" aria-label="水平约束" disabled><svg><path d="M1 9h14M6 6h4"/></svg></button>
        <button class="tb" aria-label="竖直约束" disabled><svg><path d="M8 2v13M5 5v5"/></svg></button>
        <button class="tb" aria-label="同心约束" disabled><svg><circle cx="8" cy="8" r="6"/><circle cx="8" cy="8" r="3"/><path d="M8 7v2"/></svg></button>
        <button class="tb" aria-label="尺寸约束" disabled><svg><path d="M2 3h5v4l7 5-3 3-7-7zM6 8l4-2"/></svg></button>
        <button class="tb" aria-label="等长约束" disabled><svg><path d="M1 4h14M3 8h10M1 12h14M5 6l-2 2 2 2"/></svg></button>
        <button class="tb" aria-label="角度约束" disabled><svg><path d="M9 2l-7 11h13M6 7q4 1 4 6"/></svg></button>
        <button class="tb" aria-label="共线约束" disabled><svg><path d="M1 2l5 5M9 10l5 5M5 2l3 3"/></svg></button>
        <i class="sep"></i>
    </div>

    <footer class="status">
        <span class="hint">零件/装配截面.</span>
        <span class="cell size">视图尺寸:<span class="mono">  592 x  505</span></span>
        <span class="cell units mono">mm, deg</span>
        <span class="cell clock mono">23:22</span>
        <svg class="resize" aria-hidden="true"><path d="M1 13L13 1M5 13L13 5M9 13L13 9" stroke="#aca899" stroke-width="2"/></svg>
    </footer>

    <svg class="pointer" aria-hidden="true"><path d="M1 1v17l4-4 3 7 3-1-3-7h5z" fill="#fff" stroke="#000"/></svg>
</div>

</body>
</html>
```

FILE: styles.css
```css
* { box-sizing: border-box; }

body {
    margin: 0;
    font-family: "Liberation Serif", "Noto Sans CJK SC", serif;
    font-size: 12px;
    line-height: 16px;
    color: #000;
    background: #fff;
}

button {
    padding: 0;
    border: 0;
    background: none;
    font: inherit;
    color: inherit;
}

ul { list-style: none; margin: 0; padding: 0; }
svg { display: block; flex: none; }
.defs { position: absolute; width: 0; height: 0; }

.window {
    position: relative;
    display: flex;
    flex-direction: column;
    height: 100vh;
    min-height: 600px;
    padding: 0 4px 4px;
    overflow: hidden;
    border-radius: 8px 8px 0 0;
    background: #0a46e0;
    box-shadow: inset 1px 0 #0019cf, inset -1px -1px #00138c;
}

/* title bar */
.titlebar {
    display: flex;
    align-items: center;
    flex: none;
    height: 30px;
    margin: 0 -4px;
    padding: 2px 6px 0;
    background: linear-gradient(#0a50d8 0, #3d95ff 7%, #0a5ef0 16%, #0054e3 35%, #0058ea 60%, #0468fc 88%, #0046c8 100%);
}

.app-icon { width: 16px; height: 16px; }

.titlebar h1 {
    flex: 1;
    margin: 0 0 0 4px;
    font: bold 13px/20px "Liberation Mono", "Noto Sans CJK SC", monospace;
    color: #fff;
    text-shadow: 1px 1px #0a2a88;
    white-space: nowrap;
}

.win-buttons { display: flex; gap: 2px; }

.win-btn {
    width: 21px;
    height: 21px;
    border: 1px solid #fff;
    border-radius: 3px;
    background: linear-gradient(135deg, #7ba4f4, #2a5fe0 45%, #1c4fd0);
}

.win-btn svg { width: 19px; height: 19px; }
.win-btn.close { background: linear-gradient(135deg, #f0a088, #e04a20 45%, #c83a10); }

/* bars */
.bar {
    display: flex;
    align-items: center;
    flex: none;
    height: 26px;
    padding-left: 2px;
    overflow: hidden;
    background: #ece9d8;
    border-top: 1px solid #aca899;
    box-shadow: inset 0 1px #fff;
}

.grip {
    flex: none;
    width: 4px;
    height: 21px;
    margin: 0 1px;
    border: solid #aca899;
    border-width: 0 1px;
    box-shadow: inset 1px 0 #fff, 1px 0 #fff;
}

.grip.spaced { margin-left: 8px; }

.sep {
    flex: none;
    align-self: stretch;
    width: 2px;
    margin: 1px 1px 0 5px;
    background: #aca899;
    border-right: 1px solid #fff;
}

.menu { height: 30px; padding-bottom: 2px; border-top-color: #fff; }
.menu .grip { height: 23px; }
.doc-icon { width: 17px; height: 17px; margin: 0 0 0 1px; }
.menu-list { display: flex; flex: 1; gap: 12px; margin-left: 6px; }
.menu-list a { color: inherit; text-decoration: none; white-space: nowrap; }

.mdi-buttons { display: flex; gap: 3px; padding-right: 1px; }

.mdi-btn {
    width: 20px;
    height: 20px;
    padding: 1px;
    background: #ece9d8;
    border: 1px solid;
    border-color: #fff #716f64 #716f64 #fff;
    box-shadow: inset -1px -1px #aca899;
}

.mdi-btn svg { width: 16px; height: 16px; shape-rendering: crispEdges; }
.mdi-btn:last-child svg { shape-rendering: auto; }

.tb {
    display: flex;
    align-items: center;
    justify-content: center;
    flex: none;
    width: 24px;
    height: 22px;
}

.tb svg {
    width: 17px;
    height: 17px;
    overflow: visible;
    fill: none;
    stroke: #000;
}

.tb.pressed {
    height: 23px;
    border: 1px solid;
    border-color: #aca899 #fff #fff #aca899;
    background: #f6f4ec;
}

.tb:disabled svg { stroke: #aca899; filter: drop-shadow(1px 1px 0 #fff); }

/* icon paints */
.k { fill: #000; }
.w { fill: #fff; }
.s { fill: #aca899; }
.m { fill: #900010; }
.ms { stroke: #900000; }
.bs { stroke: #000090; }
.tb:disabled .k { fill: #aca899; }
.glyph { font: bold 16px "Liberation Serif", serif; stroke: none; }
.glyph.slant { font-style: italic; fill: #000; filter: drop-shadow(2px 1px 0 #999); }
.glyph.small { font-size: 14px; }
.glyph.fx { font-size: 10px; fill: #000; }

.select-bar { padding-left: 4px; }
.select-bar .pressed { margin-left: 2px; }

.combo {
    position: relative;
    flex: none;
    width: 146px;
    height: 20px;
    margin-left: 11px;
    border: 1px solid;
    border-color: #716f64 #fff #fff #716f64;
}

.combo + .combo { margin-left: 16px; }
.combo + .tb { margin-left: 9px; }

.combo select {
    appearance: none;
    width: 100%;
    height: 18px;
    padding: 0 18px 0 1px;
    border: 1px solid #aca899;
    border-radius: 0;
    background: #fff;
    font: 11px "Liberation Sans", "Noto Sans CJK SC", sans-serif;
    color: #000;
}

.combo select.cjk { font-size: 12px; }

.combo::before {
    content: "";
    position: absolute;
    top: 1px;
    right: 1px;
    width: 16px;
    height: 16px;
    background: #ece9d8;
    border: 1px solid;
    border-color: #fff #716f64 #716f64 #fff;
    pointer-events: none;
}

.combo::after {
    content: "";
    position: absolute;
    top: 8px;
    right: 5px;
    border: 4px solid transparent;
    border-top-color: #000;
    border-bottom: 0;
    pointer-events: none;
}

.sep.last { margin-left: 23px; }

/* workspace */
.workspace {
    display: flex;
    flex: 1;
    min-height: 0;
    background: #ece9d8;
}

.side-tools {
    display: flex;
    flex-direction: column;
    flex: none;
    width: 27px;
    padding-top: 3px;
    overflow: hidden;
}

.side-tools .tb { height: 23px; }

.grip-h {
    flex: none;
    height: 5px;
    margin: 1px 3px 2px 2px;
    border: solid #aca899;
    border-width: 1px 0;
    box-shadow: inset 0 1px #fff, 0 1px #fff;
}

.sep-h {
    flex: none;
    height: 2px;
    margin: 1px 0;
    background: #aca899;
    border-bottom: 1px solid #fff;
}

.tree-pane {
    display: flex;
    flex-direction: column;
    flex: none;
    width: 150px;
    margin-right: 5px;
    border: solid #716f64;
    border-width: 1px 0 0 1px;
    background: #fff;
}

.tree { flex: 1; min-height: 0; overflow: hidden; }

.row {
    display: flex;
    align-items: center;
    height: 16px;
    white-space: nowrap;
}

.row svg { width: 16px; height: 16px; fill: none; }
.row svg + span { margin-left: 4px; }
.row svg + .root-name { margin-left: 5px; }

.branches {
    padding-left: 4px;
    background: repeating-linear-gradient(#aca899 0 1px, transparent 1px 2px) 8px 0 / 1px calc(100% - 8px) no-repeat;
}

.parts {
    margin-left: 24px;
    background: repeating-linear-gradient(#aca899 0 1px, transparent 1px 2px) 0 0 / 1px calc(100% - 8px) no-repeat;
}

.toggle {
    flex: none;
    width: 9px;
    height: 9px;
    border: 1px solid #8a8a8a;
    background: #fff;
    font: 9px/7px "DejaVu Sans Mono", monospace;
}

.stub { flex: none; width: 6px; border-top: 1px dotted #aca899; }
.parts .stub { width: 11px; }

.scroll { display: flex; flex: none; height: 16px; padding-right: 2px; background: #f5f4ef; }

.scroll-btn {
    width: 16px;
    height: 15px;
    border: 1px solid #9cb4f0;
    border-radius: 2px;
    background: linear-gradient(135deg, #dce6ff, #b4c8f6);
}

.scroll-btn svg { width: 14px; height: 14px; margin-top: -1px; }
.track { flex: 1; padding: 0 1px; }

.thumb {
    width: 68%;
    height: 15px;
    border: 1px solid #9cb4f0;
    border-radius: 2px;
    background:
        repeating-linear-gradient(90deg, #8ca8e8 0 1px, #eef3ff 1px 2px) center / 8px 6px no-repeat,
        linear-gradient(#cfdcff, #b8caf8);
}

.view {
    flex: 1;
    min-width: 0;
    border: solid #000;
    border-width: 1px 0 0 1px;
    background: linear-gradient(#5578a8 0, #7c9ac6 28%, #a9bcdc 50%, #d4deec 72%, #fff 100%);
}

.view > svg { width: 100%; height: 100%; }
.face path { stroke: #000; shape-rendering: crispEdges; }
.wire path { fill: none; stroke: #000; shape-rendering: crispEdges; }
.axes text { font: bold 9px "DejaVu Sans Mono", monospace; }

/* catalog tabs */
.catalog {
    display: flex;
    flex-direction: column;
    flex: none;
    width: 28px;
    margin-left: 2px;
    padding: 2px 3px 0 3px;
    border-left: 1px solid #fff;
    border-right: 2px solid #aca899;
    overflow: hidden;
}

.pager {
    flex: none;
    padding-left: 2px;
    padding-bottom: 6px;
    border-left: 1px solid #000;
}

.pager button {
    display: block;
    width: 15px;
    height: 15px;
    border: 1px solid;
    border-color: #fff #716f64 #716f64 #fff;
}

.pager svg { width: 13px; height: 13px; shape-rendering: crispEdges; }

.tabs {
    display: flex;
    flex-direction: column;
    flex: 1;
    min-height: 0;
    overflow: hidden;
}

.tab {
    flex: none;
    width: 20px;
    padding: 6px 0 5px;
    border-left: 1px solid #000;
    border-right: 1px solid #aca899;
    border-bottom: 1px solid #aca899;
    border-radius: 0 3px 3px 0;
    box-shadow: inset 0 1px #fff;
    font: 15px/18px "Noto Sans CJK SC", sans-serif;
    writing-mode: vertical-rl;
    text-orientation: sideways;
}

.tab.active {
    border-left-color: transparent;
    border-right-color: #000;
    border-bottom-color: #000;
    font-weight: bold;
}

/* bottom */
.sketch-bar { padding-left: 29px; }

.status {
    display: flex;
    align-items: center;
    flex: none;
    gap: 3px;
    height: 21px;
    padding: 0 1px;
    background: #ece9d8;
    border-top: 1px solid #aca899;
    box-shadow: inset 0 1px #fff;
}

.hint { flex: 1; white-space: nowrap; }

.cell {
    height: 17px;
    padding-left: 1px;
    border: 1px solid;
    border-color: #aca899 #fff #fff #aca899;
    white-space: pre;
}

.mono { font-family: "DejaVu Sans Mono", monospace; font-size: 10px; }
.size { width: 138px; }
.units { width: 131px; }
.clock { width: 47px; }
.resize { width: 14px; height: 14px; }

.pointer {
    position: absolute;
    left: 330px;
    top: 97px;
    width: 15px;
    height: 22px;
}
```
